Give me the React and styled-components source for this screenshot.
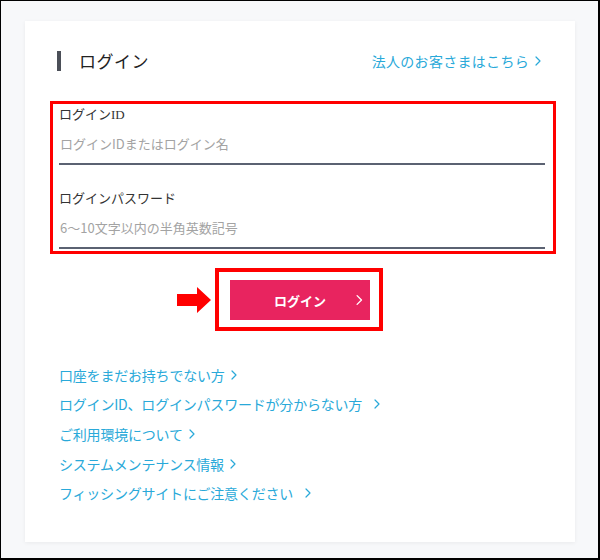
import styled, { createGlobalStyle } from 'styled-components';

const GlobalStyle = createGlobalStyle`
  body {
    margin: 0;
    font-family: 'Noto Sans CJK JP', 'Noto Sans', sans-serif;
  }
  * {
    box-sizing: border-box;
  }
`;

const links = [
  { text: '口座をまだお持ちでない方', spaced: false },
  { text: 'ログインID、ログインパスワードが分からない方', spaced: true },
  { text: 'ご利用環境について', spaced: false },
  { text: 'システムメンテナンス情報', spaced: false },
  { text: 'フィッシングサイトにご注意ください', spaced: true },
];

function Chevron({ color = '#29a9d9', size = 10 }) {
  return (
    <svg width={size * 0.6} height={size} viewBox="0 0 6 10" fill="none">
      <path d="M1 1 L5 5 L1 9" stroke={color} strokeWidth="1.2" strokeLinecap="round" strokeLinejoin="round" />
    </svg>
  );
}

export default function App() {
  return (
    <>
      <GlobalStyle />
      <Page>
        <Card>
          <Header>
            <Title>ログイン</Title>
            <CorpLink>
              法人のお客さまはこちら
              <Chevron />
            </CorpLink>
          </Header>

          <FieldBox>
            <Field>
              <Label>ログインID</Label>
              <Input placeholder="ログインIDまたはログイン名" />
            </Field>
            <Field>
              <Label>ログインパスワード</Label>
              <Input type="password" placeholder="6〜10文字以内の半角英数記号" />
            </Field>
          </FieldBox>

          <ButtonRow>
            <ButtonFrame>
              <Arrow>
                <svg width="34" height="26" viewBox="0 0 34 26">
                  <path d="M0 7 H20 V0 L34 13 L20 26 V19 H0 Z" fill="#ff0000" />
                </svg>
              </Arrow>
              <LoginButton>
                ログイン
                <ButtonChevron>
                  <Chevron color="#ffffff" size={11} />
                </ButtonChevron>
              </LoginButton>
            </ButtonFrame>
          </ButtonRow>

          <LinkList>
            {links.map((l) => (
              <LinkItem key={l.text} $spaced={l.spaced}>
                {l.text}
                <Chevron />
              </LinkItem>
            ))}
          </LinkList>
        </Card>
      </Page>
    </>
  );
}

const Page = styled.div`
  width: 600px;
  height: 560px;
  background: #f7f8fa;
  border: 1px solid #000;
  border-right-width: 2px;
  border-bottom-width: 2px;
  padding: 20px 0 0 24px;
`;

const Card = styled.div`
  width: 550px;
  height: 521px;
  background: #fff;
  box-shadow: 0 1px 4px rgba(0, 0, 0, 0.06);
  padding: 30px 19px 0 25px;
`;

const Header = styled.div`
  display: flex;
  justify-content: space-between;
  align-items: center;
  height: 20px;
  padding: 0 15px 0 7px;
`;

const Title = styled.h1`
  margin: 0;
  border-left: 4px solid #4b4f58;
  padding-left: 18px;
  font-size: 17px;
  line-height: 20px;
  font-weight: 400;
  color: #222;
  letter-spacing: 0.5px;
`;

const CorpLink = styled.a`
  display: flex;
  align-items: center;
  gap: 6px;
  font-size: 14px;
  color: #29a9d9;
  cursor: pointer;
  letter-spacing: 0.3px;
`;

const FieldBox = styled.div`
  margin-top: 30px;
  border: 3px solid #ff0000;
  padding: 2px 8px 2px 6px;
  display: flex;
  flex-direction: column;
  gap: 25px;
`;

const Field = styled.div`
  display: flex;
  flex-direction: column;
`;

const Label = styled.label`
  font-size: 13px;
  line-height: 18px;
  color: #333;
  font-family: 'Liberation Serif', 'Noto Sans CJK JP', serif;
`;

const Input = styled.input`
  margin-top: 2px;
  height: 39px;
  border: none;
  border-bottom: 2px solid #5b6272;
  padding: 0 0 3px 1px;
  font-size: 13px;
  font-family: 'Noto Sans CJK JP', sans-serif;
  color: #333;
  outline: none;
  background: transparent;

  &::placeholder {
    color: #a3a3a3;
  }
`;

const ButtonRow = styled.div`
  display: flex;
  justify-content: center;
  margin-top: 14px;
  padding-right: 8px;
`;

const ButtonFrame = styled.div`
  position: relative;
  border: 4px solid #ff0000;
  padding: 8px 9px 7px 11px;
`;

const Arrow = styled.div`
  position: absolute;
  left: -42px;
  top: 15px;
  display: flex;
`;

const LoginButton = styled.button`
  position: relative;
  width: 140px;
  height: 40px;
  border: none;
  background: #e8245f;
  color: #fff;
  font-family: 'Noto Sans CJK JP', sans-serif;
  font-size: 13px;
  font-weight: 700;
  cursor: pointer;
  display: flex;
  align-items: center;
  justify-content: center;
`;

const ButtonChevron = styled.span`
  position: absolute;
  right: 7px;
  top: 50%;
  transform: translateY(-50%);
  display: flex;
`;

const LinkList = styled.div`
  margin-top: 29px;
  padding-left: 9px;
  display: flex;
  flex-direction: column;
`;

const LinkItem = styled.a`
  display: flex;
  align-items: center;
  gap: ${(p) => (p.$spaced ? '12px' : '6px')};
  height: 29.6px;
  font-size: 14px;
  color: #29a9d9;
  cursor: pointer;
  letter-spacing: -0.2px;
`;
